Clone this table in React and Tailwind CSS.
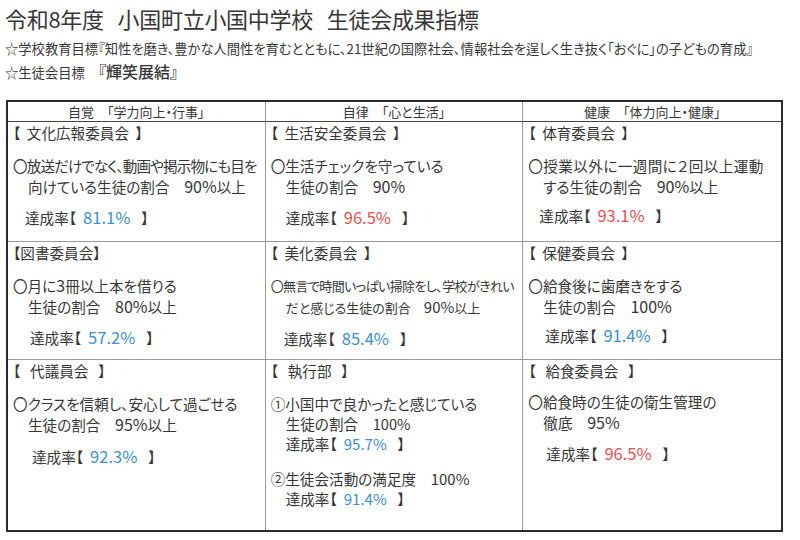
import React from 'react';

const jp = "font-['Noto_Sans_CJK_JP','Noto_Sans_CJK_SC',sans-serif] [font-feature-settings:'palt']";

// numbers in the scan are set a little larger than the kana/kanji
const N = ({ children, className = 'text-[16px]' }) => <span className={className}>{children}</span>;

const Rate = ({ value, red, className = '', size = 'text-[16.5px]' }) => (
  <div className={`leading-[21px] whitespace-pre ${className}`}>
    達成率【
    <span className={`ml-[7px] ${size} ${red ? 'text-[#e8504f]' : 'text-[#3d8fd8]'}`}>{value}</span>
    <span className="ml-[11px]">】</span>
  </div>
);

const Cell = ({ title, lines, rate, red, small, border = '', bodyTop = 'mt-[12px]', rateTop = 'mt-[10px]', rateIndent = 'pl-[12px]' }) => (
  <div className={`pl-[5px] pr-1 ${border}`}>
    <div className="leading-[21px] whitespace-pre">{title}</div>
    <div className={`${bodyTop} ${small ? 'text-[13px]' : ''}`}>
      {lines.map((l, i) => (
        <div key={i} className={`leading-[21px] whitespace-pre ${i > 0 ? 'pl-[15px]' : ''}`}>{l}</div>
      ))}
    </div>
    <Rate value={rate} red={red} className={`${rateTop} ${rateIndent}`} />
  </div>
);

export default function App() {
  const colB = 'border-r border-b border-[#9a9a9a]';
  const lastB = 'border-b border-[#9a9a9a]';
  const colR = 'border-r border-[#9a9a9a]';

  return (
    <div className={`w-[800px] h-[540px] overflow-hidden bg-white text-[#363636] ${jp}`}>
      <div className="pt-[4px] pl-[5px]">
        <h1 className="text-[22px] leading-[28px] font-normal tracking-[-0.3px] whitespace-pre">令和8年度   小国町立小国中学校   生徒会成果指標</h1>
        <p className="mt-[7px] text-[13.3px] leading-[20px] whitespace-pre">☆学校教育目標『知性を磨き、豊かな人間性を育むとともに、21世紀の国際社会、情報社会を逞しく生き抜く「おぐに」の子どもの育成』</p>
        <p className="mt-[2px] text-[13.3px] leading-[20px] whitespace-pre">
          ☆生徒会目標　<span className="text-[16px] font-medium">『輝笑展結』</span>
        </p>
      </div>

      <div className="mt-[17px] ml-[6px] w-[777px] border-2 border-[#2a2a2a] grid grid-cols-3 grid-rows-[20px_120px_118px_170px] text-[14.6px]">
        {/* header */}
        <div className="border-r border-b border-r-[#9a9a9a] border-b-[#444] text-center text-[13px] leading-[19px] whitespace-pre">自覚　「学力向上・行事」</div>
        <div className="border-r border-b border-r-[#9a9a9a] border-b-[#444] text-center text-[13px] leading-[19px] whitespace-pre">自律　「心と生活」</div>
        <div className="border-b border-b-[#444] text-center text-[13px] leading-[19px] whitespace-pre">健康　「体力向上・健康」</div>

        {/* row 1 */}
        <Cell
          border={colB}
          title="【  文化広報委員会  】"
          lines={[
            <span className="tracking-[-0.9px]">〇放送だけでなく、動画や掲示物にも目を</span>,
            <>向けている生徒の割合　<N>90%</N>以上</>,
          ]}
          rate="81.1%"
          rateIndent="pl-[12px]"
        />
        <Cell
          border={colB}
          title="【  生活安全委員会  】"
          lines={['〇生活チェックを守っている', <>生徒の割合　<N>90%</N></>]}
          rate="96.5%"
          red
          rateIndent="pl-[15px]"
        />
        <Cell
          border={lastB}
          title="【  体育委員会  】"
          lines={[
            <span className="tracking-[0.4px]">〇授業以外に一週間に２回以上運動</span>,
            <>する生徒の割合　<N>90%</N>以上</>,
          ]}
          rate="93.1%"
          red
          rateTop="mt-[8px]"
          rateIndent="pl-[11px]"
        />

        {/* row 2 */}
        <Cell
          border={colB}
          title="【図書委員会】"
          lines={[<>〇月に<N>3</N>冊以上本を借りる</>, <>生徒の割合　<N>80%</N>以上</>]}
          rate="57.2%"
          rateIndent="pl-[17px]"
        />
        <Cell
          border={colB}
          title="【  美化委員会  】"
          lines={[
            <span className="tracking-[-0.6px]">〇無言で時間いっぱい掃除をし、学校がきれい</span>,
            <>だと感じる生徒の割合　<N className="text-[15px]">90%</N>以上</>,
          ]}
          small
          rate="85.4%"
          rateIndent="pl-[13px]"
        />
        <Cell
          border={lastB}
          title="【  保健委員会  】"
          lines={['〇給食後に歯磨きをする', <>生徒の割合　<N>100%</N></>]}
          rate="91.4%"
          rateTop="mt-[8px]"
          rateIndent="pl-[17px]"
        />

        {/* row 3 */}
        <Cell
          border={colR}
          title="【   代議員会   】"
          lines={['〇クラスを信頼し、安心して過ごせる', <>生徒の割合　<N>95%</N>以上</>]}
          rate="92.3%"
          bodyTop="mt-[12px]"
          rateTop="mt-[11px]"
          rateIndent="pl-[19px]"
        />
        <div className={`pl-[5px] pr-1 ${colR}`}>
          <div className="leading-[21px] whitespace-pre">【   執行部   】</div>
          <div className="mt-[13px]">
            <div className="leading-[20px] whitespace-pre">①小国中で良かったと感じている</div>
            <div className="leading-[20px] whitespace-pre pl-[15px]">生徒の割合　<N className="text-[14.6px]">100%</N></div>
            <Rate value="95.7%" size="text-[15px]" className="pl-[15px] !leading-[20px]" />
          </div>
          <div className="mt-[15px]">
            <div className="leading-[20px] whitespace-pre">②生徒会活動の満足度　<N className="text-[15px]">100%</N></div>
            <Rate value="91.4%" size="text-[15px]" className="pl-[15px] !leading-[20px]" />
          </div>
        </div>
        <Cell
          title="【   給食委員会   】"
          lines={['〇給食時の生徒の衛生管理の', <>徹底　<N>95%</N></>]}
          rate="96.5%"
          red
          bodyTop="mt-[10px]"
          rateTop="mt-[10px]"
          rateIndent="pl-[18px]"
        />
      </div>
    </div>
  );
}
